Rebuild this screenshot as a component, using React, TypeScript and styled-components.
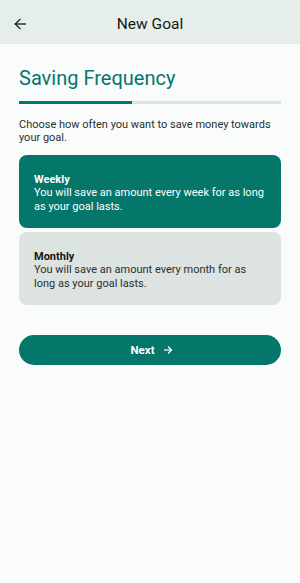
import React from 'react'
import styled, { createGlobalStyle } from 'styled-components'

const GlobalStyle = createGlobalStyle`
  html, body {
    margin: 0;
    padding: 0;
    background: #f9fcfb;
  }
  body {
    font-family: Roboto, 'Liberation Sans', sans-serif;
  }
`

const TEAL = '#04766a'

const Screen = styled.div`
  width: 300px;
  min-height: 583px;
  background: #f9fcfb;
  display: flex;
  flex-direction: column;
`

const Header = styled.header`
  height: 44px;
  box-sizing: border-box;
  padding-top: 3px;
  background: #e6eeeb;
  display: grid;
  grid-template-columns: 44px 1fr 44px;
  align-items: center;
`

const BackButton = styled.button`
  border: none;
  background: none;
  padding: 0 0 0 12px;
  display: flex;
  align-items: center;
  color: #1b1d1c;
  cursor: pointer;
`

const HeaderTitle = styled.h1`
  margin: 0;
  text-align: center;
  font-size: 15.5px;
  font-weight: 400;
  color: #151817;
`

const Body = styled.main`
  padding: 22px 19px 0;
  display: flex;
  flex-direction: column;
`

const Title = styled.h2`
  margin: 0;
  font-size: 20px;
  font-weight: 400;
  line-height: 24px;
  color: ${TEAL};
`

const Progress = styled.div`
  margin-top: 11px;
  height: 3px;
  background: #d9e3e0;
  display: flex;
`

const ProgressFill = styled.div`
  background: ${TEAL};
  height: 100%;
`

const Intro = styled.p`
  margin: 14px 0 0;
  font-size: 11px;
  line-height: 13px;
  color: #2b2f2d;
`

const Options = styled.div`
  margin-top: 11px;
  display: flex;
  flex-direction: column;
  gap: 4px;
`

const Option = styled.div<{ selected: boolean }>`
  border-radius: 8px;
  padding: 18px 15px 0;
  height: 73px;
  box-sizing: border-box;
  background: ${(p) => (p.selected ? TEAL : '#dce3e0')};
  color: ${(p) => (p.selected ? '#ffffff' : '#2b2f2d')};
  cursor: pointer;
`

const OptionTitle = styled.div<{ selected: boolean }>`
  font-size: 11px;
  line-height: 13px;
  font-weight: 700;
  color: ${(p) => (p.selected ? '#ffffff' : '#151817')};
`

const OptionText = styled.div`
  font-size: 11px;
  line-height: 13.5px;
`

const NextButton = styled.button`
  margin-top: 30px;
  height: 30px;
  border: none;
  border-radius: 15px;
  background: ${TEAL};
  color: #ffffff;
  font-family: Roboto, 'Liberation Sans', sans-serif;
  font-size: 11.5px;
  font-weight: 700;
  display: flex;
  align-items: center;
  justify-content: center;
  gap: 7px;
  padding-left: 10px;
  cursor: pointer;
`

const Arrow = ({ size, width }: { size: number; width: number }) => (
  <svg width={size} height={size} viewBox="0 0 24 24" fill="none" stroke="currentColor" strokeWidth={width} strokeLinecap="square">
    <path d="M20 12H5" />
    <path d="M12 5l-7 7 7 7" />
  </svg>
)

const ArrowRight = () => (
  <svg width={12} height={12} viewBox="0 0 24 24" fill="none" stroke="currentColor" strokeWidth={2.4}>
    <path d="M4 12h15" />
    <path d="M12 5l7 7-7 7" />
  </svg>
)

const options = [
  { key: 'weekly', title: 'Weekly', text: 'You will save an amount every week for as long as your goal lasts.' },
  { key: 'monthly', title: 'Monthly', text: 'You will save an amount every month for as long as your goal lasts.' },
]

const App = () => {
  const [selected, setSelected] = React.useState('weekly')
  const progress = 43

  return (
    <>
      <GlobalStyle />
      <Screen>
        <Header>
          <BackButton type="button" aria-label="Back">
            <Arrow size={16} width={2} />
          </BackButton>
          <HeaderTitle>New Goal</HeaderTitle>
          <span />
        </Header>
        <Body>
          <Title>Saving Frequency</Title>
          <Progress>
            <ProgressFill style={{ width: `${progress}%` }} />
          </Progress>
          <Intro>Choose how often you want to save money towards your goal.</Intro>
          <Options>
            {options.map((o) => (
              <Option key={o.key} selected={selected === o.key} onClick={() => setSelected(o.key)}>
                <OptionTitle selected={selected === o.key}>{o.title}</OptionTitle>
                <OptionText>{o.text}</OptionText>
              </Option>
            ))}
          </Options>
          <NextButton type="button">
            Next <ArrowRight />
          </NextButton>
        </Body>
      </Screen>
    </>
  )
}

export default App
